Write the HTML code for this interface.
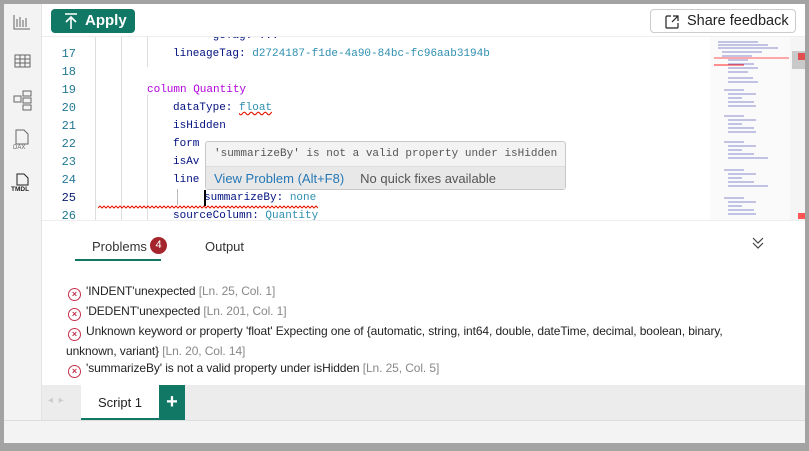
<!DOCTYPE html>
<html><head><style>
*{margin:0;padding:0;box-sizing:border-box}
body{width:809px;height:451px;background:#a3a3a3;position:relative;overflow:hidden;font-family:"Liberation Sans",sans-serif}
.win{position:absolute;left:4px;top:4px;width:801px;height:439px;background:#fff}
.side{position:absolute;left:0;top:0;width:38px;height:416px;background:#f3f3f3;border-right:1px solid #e4e4e4}
.top{position:absolute;left:38px;top:0;right:0;height:33px;background:#fff;border-bottom:1px solid #eee}
.apply{position:absolute;left:9px;top:5px;width:84px;height:24px;background:#117865;border-radius:4px;color:#fff;font-weight:bold;font-size:15px;line-height:24px;padding-left:34px}
.share{position:absolute;left:608px;top:5px;width:146px;height:24px;border:1px solid #ccc;border-radius:4px;font-size:14.5px;line-height:22px;padding-left:36px;color:#222;white-space:nowrap}
.code{position:absolute;top:33px;left:38px;width:763px;height:183px;overflow:hidden;font-family:"Liberation Mono",monospace;font-size:11px}
.ln{position:absolute;left:14px;width:20px;text-align:right;color:#237893;font-size:12px}
.tx{position:absolute;white-space:pre;color:#001080}
.g{position:absolute;width:1px;background:#ddd}
.bp{position:absolute;left:38px;top:216px;width:763px;height:165px;background:#fff;border-top:1px solid #eee}
.err{position:absolute;font-size:12px;color:#222;white-space:nowrap;letter-spacing:-0.1px}
.err i{display:inline-block;width:13px;height:13px;border:1.5px solid #c4314b;border-radius:50%;color:#c4314b;font-style:normal;font-size:9px;line-height:10px;text-align:center;vertical-align:-2px;margin-right:5px;font-weight:bold}
.err span{color:#888}
.tabs{position:absolute;left:38px;top:381px;width:763px;height:35px;background:#ececec}
.bot{position:absolute;left:0;top:416px;width:801px;height:23px;background:#f3f3f3;border-top:1px solid #ddd}
</style></head><body><div class="win">
<div class="side">
<svg width="38" height="200" style="position:absolute;left:0;top:0" fill="none" stroke="#666" stroke-width="1">
<path d="M10 11v14h16M13 23v-8M16 23v-10M19 23v-7M22 23v-9"/>
<rect x="11" y="51" width="15" height="12"/><path d="M11 55h15M11 59h15M16 51v12M21 51v12"/>
<rect x="10" y="92" width="7" height="6"/><rect x="19" y="87" width="8" height="5"/><rect x="19" y="94" width="8" height="5"/><rect x="19" y="101" width="8" height="5"/>
<path d="M12 126h8l4 4v10h-12z"/><text x="9" y="145" font-size="6" fill="#666" stroke="none" font-family="Liberation Sans">DAX</text>
<path d="M13 170h7l4 4v7h-11z" stroke="#222"/><text x="7" y="187" font-size="6.5" font-weight="bold" fill="#222" stroke="none" font-family="Liberation Sans">TMDL</text>
</svg></div>
<div class="top">
<div class="apply"><svg width="16" height="18" style="position:absolute;left:12px;top:3px" stroke="#fff" stroke-width="1.6" fill="none"><path d="M2 2h12M8 17V6M3 10l5-5 5 5"/></svg>Apply</div>
<div class="share"><svg width="16" height="16" style="position:absolute;left:13px;top:4px" stroke="#222" stroke-width="1.2" fill="none"><path d="M7 2H3a1 1 0 0 0-1 1v10a1 1 0 0 0 1 1h10a1 1 0 0 0 1-1V9M9 2h5v5M14 2L8 8"/></svg>Share feedback</div>
</div>
<div class="code">
<div class="g" style="left:53px;top:0;height:183px"></div>
<div class="g" style="left:79px;top:0;height:183px"></div>
<div class="g" style="left:105px;top:0;height:30px"></div>
<div class="g" style="left:105px;top:58px;height:125px"></div>
<div class="g" style="left:135px;top:152px;height:16px;background:#bbb"></div>
<div class="tx" style="left:131px;top:-7px">      geTag: ...</div>
<div class="ln" style="top:10px">17</div><div class="tx" style="left:131px;top:11px">lineageTag: <span style="color:#2e8fb0">d2724187-f1de-4a90-84bc-fc96aab3194b</span></div>
<div class="ln" style="top:28px">18</div>
<div class="ln" style="top:46px">19</div><div class="tx" style="left:105px;top:47px"><span style="color:#af00db">column Quantity</span></div>
<div class="ln" style="top:64px">20</div><div class="tx" style="left:131px;top:65px">dataType: <span style="color:#2e8fb0;text-decoration:underline wavy #e51400">float</span></div>
<div class="ln" style="top:82px">21</div><div class="tx" style="left:131px;top:83px">isHidden</div>
<div class="ln" style="top:100px">22</div><div class="tx" style="left:131px;top:101px">form</div>
<div class="ln" style="top:118px">23</div><div class="tx" style="left:131px;top:119px">isAv</div>
<div class="ln" style="top:136px">24</div><div class="tx" style="left:131px;top:137px">line</div>
<div class="ln" style="top:154px;color:#0b216f">25</div><div class="tx" style="left:162px;top:155px">summarizeBy: <span style="color:#2e8fb0">none</span></div>
<svg style="position:absolute;left:56px;top:168px" width="220" height="5"><path d="M0 3 l2 -2 2 2 2 -2 2 2 2 -2 2 2 2 -2 2 2 2 -2 2 2 2 -2 2 2 2 -2 2 2 2 -2 2 2 2 -2 2 2 2 -2 2 2 2 -2 2 2 2 -2 2 2 2 -2 2 2 2 -2 2 2 2 -2 2 2 2 -2 2 2 2 -2 2 2 2 -2 2 2 2 -2 2 2 2 -2 2 2 2 -2 2 2 2 -2 2 2 2 -2 2 2 2 -2 2 2 2 -2 2 2 2 -2 2 2 2 -2 2 2 2 -2 2 2 2 -2 2 2 2 -2 2 2 2 -2 2 2 2 -2 2 2 2 -2 2 2 2 -2 2 2 2 -2 2 2 2 -2 2 2 2 -2 2 2 2 -2 2 2 2 -2 2 2 2 -2 2 2 2 -2 2 2 2 -2 2 2 2 -2 2 2 2 -2 2 2 2 -2 2 2 2 -2 2 2 2 -2 2 2 2 -2 2 2 2 -2 2 2 2 -2 2 2 2 -2 2 2 2 -2 2 2 2 -2 2 2 2 -2 2 2 2 -2 2 2" fill="none" stroke="#e51400" stroke-width="1"/></svg>
<div style="position:absolute;left:162px;top:153px;width:1.5px;height:16px;background:#000"></div>
<div class="ln" style="top:172px">26</div><div class="tx" style="left:131px;top:173px">sourceColumn: <span style="color:#2e8fb0">Quantity</span></div>
<div style="position:absolute;left:163px;top:104px;width:361px;height:49px;background:#f3f3f3;border:1px solid #c8c8c8;border-radius:3px">
<div style="height:24px;line-height:24px;padding-left:8px;color:#555;white-space:pre">'summarizeBy' is not a valid property under isHidden</div>
<div style="height:23px;line-height:23px;padding-left:8px;background:#e8e8e8;border-top:1px solid #ddd;font-family:'Liberation Sans',sans-serif;font-size:13px"><span style="color:#2578b5">View Problem (Alt+F8)</span><span style="color:#555;margin-left:16px">No quick fixes available</span></div></div>
<div style="position:absolute;left:668px;top:0;width:80px;height:183px;background:#fafafa"></div>
<svg style="position:absolute;left:672px;top:3px" width="76" height="178"><g stroke="#8a8ad0" stroke-width="1">
<path d="M4 2h40M4 5h50M4 8h60M8 12h40M8 16h30M14 20h20M14 24h26M14 28h30M14 32h20M14 38h25M14 42h30"/><path d="M0 18h75" stroke="#f55"/><path d="M0 25h30" stroke="#f22"/>
<path d="M10 50h20M14 54h28M14 58h14M14 62h26M14 66h28M10 76h20M14 80h28M14 84h14M14 88h26M14 92h28M10 102h20M14 106h28M14 110h14M14 114h26M14 118h40M10 130h20M14 134h28M14 138h14M14 142h26M14 146h40M10 158h20M14 162h28M14 166h14M14 170h26M14 174h28"/></g></svg>
<div style="position:absolute;left:748px;top:0;width:15px;height:183px;background:#f5f5f5"></div>
<div style="position:absolute;left:750px;top:14px;width:13px;height:18px;background:#c9c9c9"></div>
<div style="position:absolute;left:756px;top:16px;width:7px;height:7px;background:#e05050"></div>
<div style="position:absolute;left:756px;top:176px;width:7px;height:6px;background:#f55"></div>
</div>
<div class="bp">
<div style="position:absolute;left:50px;top:18px;font-size:13px;color:#333">Problems</div>
<div style="position:absolute;left:108px;top:16px;width:17px;height:17px;border-radius:50%;background:#a4262c;color:#fff;font-size:11px;text-align:center;line-height:17px">4</div>
<div style="position:absolute;left:163px;top:18px;font-size:13px;color:#333">Output</div>
<div style="position:absolute;left:33px;top:38px;width:86px;height:2px;background:#117865"></div>
<svg style="position:absolute;left:708px;top:14px" width="16" height="16" stroke="#444" fill="none" stroke-width="1.2"><path d="M3 3l5 5 5-5M3 8l5 5 5-5"/></svg>
<div class="err" style="left:26px;top:63px"><i>×</i>'INDENT'unexpected <span>[Ln. 25, Col. 1]</span></div>
<div class="err" style="left:26px;top:83px"><i>×</i>'DEDENT'unexpected <span>[Ln. 201, Col. 1]</span></div>
<div class="err" style="left:26px;top:103px"><i>×</i>Unknown keyword or property 'float' Expecting one of {automatic, string, int64, double, dateTime, decimal, boolean, binary,</div>
<div class="err" style="left:24px;top:123px">unknown, variant} <span>[Ln. 20, Col. 14]</span></div>
<div class="err" style="left:26px;top:140px"><i>×</i>'summarizeBy' is not a valid property under isHidden <span>[Ln. 25, Col. 5]</span></div>
</div>
<div class="tabs">
<div style="position:absolute;left:6px;top:10px;color:#ccc;font-size:10px">◂ &nbsp;▸</div>
<div style="position:absolute;left:39px;top:0;width:78px;height:35px;background:#fff;border-bottom:2px solid #117865;text-align:center;line-height:35px;font-size:13px;color:#222">Script 1</div>
<div style="position:absolute;left:117px;top:0;width:26px;height:35px;background:#117865;color:#fff;text-align:center;line-height:34px;font-size:20px;font-weight:bold">+</div>
</div>
<div class="bot"></div>
</div></body></html>
